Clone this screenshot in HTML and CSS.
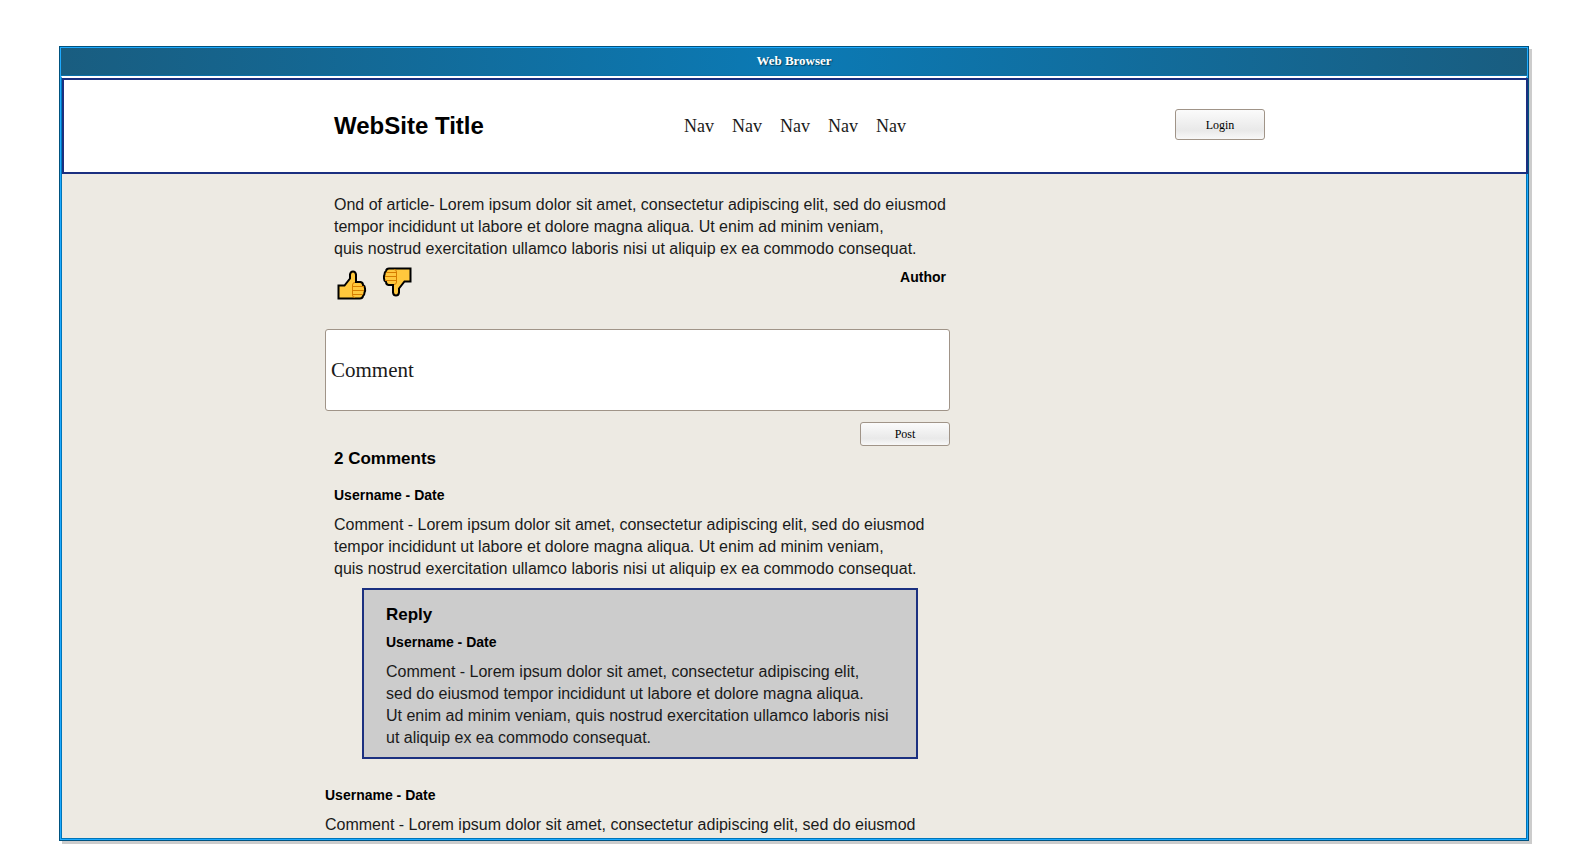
FILE: index.html
```html
<!DOCTYPE html>
<html lang="en">
<head>
<meta charset="utf-8">
<title>Web Browser</title>
<link rel="stylesheet" href="styles.css">
</head>
<body>
<div class="window">
  <div class="title-bar">Web Browser</div>
  <div class="page">
    <header class="site-header">
      <h1 class="site-title">WebSite Title</h1>
      <nav class="site-nav">
        <a href="#">Nav</a>
        <a href="#">Nav</a>
        <a href="#">Nav</a>
        <a href="#">Nav</a>
        <a href="#">Nav</a>
      </nav>
      <button class="button login" type="button">Login</button>
    </header>
    <main class="content">
      <article class="article">
        <p class="text">Ond of article- Lorem ipsum dolor sit amet, consectetur adipiscing elit, sed do eiusmod<br>tempor incididunt ut labore et dolore magna aliqua. Ut enim ad minim veniam,<br>quis nostrud exercitation ullamco laboris nisi ut aliquip ex ea commodo consequat.</p>
        <div class="article-footer">
          <div class="votes">
            <button class="vote up" type="button" aria-label="Like">
              <svg class="thumb" viewBox="0 0 30 30" width="30" height="30">
                <path class="hand" d="M1.500 15.500H7.500L13 8.500V4.500Q13.500 1.500 16 1.500Q18.500 1.500 19 4.500V12H23.500Q26 12.500 26 15Q28 16 28 18.500Q28.500 20.500 27.500 22.500Q27.500 25 26 26Q25.500 28.500 23 28.500H1.500Z"/>
                <path class="fingers" d="M27 16.500H16M16 20.500H27M16 24.500H26M18 27.500Q15.500 27.500 15.500 25V15Q15.500 12.500 18 12.500"/>
              </svg>
            </button>
            <button class="vote down" type="button" aria-label="Dislike">
              <svg class="thumb" viewBox="0 0 30 30" width="30" height="30">
                <path class="hand" d="M28.500 1.500V14.500H22.500L17 21.500V25.500Q16.500 28.500 14 28.500Q11.500 28.500 11 25.500V18H6.500Q4 17.500 4 15Q2 14 2 11.500Q1.500 9.500 2.500 7.500Q2.500 5 4 4Q4.500 1.500 7 1.500Z"/>
                <path class="fingers" d="M3 13.500H14M14 9.500H3M14 5.500H4M12 2.500Q14.500 2.500 14.500 5V15Q14.500 17.500 12 17.500"/>
              </svg>
            </button>
          </div>
          <p class="author">Author</p>
        </div>
      </article>
      <form class="comment-form">
        <input class="comment-box" type="text" aria-label="Comment" value="Comment">
        <button class="button post" type="button">Post</button>
      </form>
      <section class="comments">
        <h2 class="heading">2 Comments</h2>
        <article class="comment">
          <h3 class="byline">Username - Date</h3>
          <p class="text">Comment - Lorem ipsum dolor sit amet, consectetur adipiscing elit, sed do eiusmod<br>tempor incididunt ut labore et dolore magna aliqua. Ut enim ad minim veniam,<br>quis nostrud exercitation ullamco laboris nisi ut aliquip ex ea commodo consequat.</p>
        </article>
        <article class="reply">
          <h2 class="heading">Reply</h2>
          <h3 class="byline">Username - Date</h3>
          <p class="text">Comment - Lorem ipsum dolor sit amet, consectetur adipiscing elit,<br>sed do eiusmod tempor incididunt ut labore et dolore magna aliqua.<br>Ut enim ad minim veniam, quis nostrud exercitation ullamco laboris nisi<br>ut aliquip ex ea commodo consequat.</p>
        </article>
      </section>
      <article class="next-comment">
        <h3 class="byline">Username - Date</h3>
        <p class="text">Comment - Lorem ipsum dolor sit amet, consectetur adipiscing elit, sed do eiusmod</p>
      </article>
    </main>
  </div>
</div>
</body>
</html>
```
FILE: styles.css
```css
* {
  box-sizing: border-box;
}

body {
  margin: 0;
  padding: 46px 53px 16px 59px;
  min-height: 100vh;
  display: flex;
  background: #fff;
  color: #000;
  font-family: "Liberation Sans", Arial, sans-serif;
}

h1, h2, h3, p {
  margin: 0;
}

.window {
  flex: 1;
  display: flex;
  flex-direction: column;
  border: 1px solid #00527f;
  padding: 1px;
  background: #1eaaff;
  box-shadow: 3px 3px 0 #ccc;
}

.title-bar {
  height: 28px;
  border-bottom: 1px solid #0870a8;
  background: linear-gradient(90deg, #195d80, #0b7ab5 50%, #195d80);
  color: #fff;
  font: bold 13px/26px "Liberation Serif", "Times New Roman", serif;
  text-align: center;
  text-shadow: 1px 1px 1px #00405f;
}

.page {
  flex: 1;
  border: 1px solid #0075b8;
  border-top: 2px solid #fff;
  background: #edeae3;
}

.site-header {
  display: grid;
  grid-template-columns: 350px 1fr 90px;
  align-items: center;
  height: 96px;
  margin-right: -2px;
  padding: 0 261px 0 270px;
  border: 2px solid #1b2f80;
  background: #fff;
}

.site-title {
  font-size: 24px;
  line-height: 28px;
}

.site-nav {
  display: flex;
  gap: 18px;
}

.site-nav a {
  color: #1a1a1a;
  font: 18px/22px "Liberation Serif", "Times New Roman", serif;
  text-decoration: none;
}

.button {
  width: 90px;
  padding: 0;
  border: 1px solid #a09488;
  border-radius: 3px;
  background: linear-gradient(#fbfbfb, #e9e9e9 70%, #f8f8f8);
  color: #000;
  font: 12px/16px "Liberation Serif", "Times New Roman", serif;
}

.login {
  height: 31px;
  margin-bottom: 3px;
}

.content {
  width: 625px;
  margin: 20px 0 0 263px;
}

.article {
  padding-left: 9px;
}

.text {
  color: #1a1a1a;
  font-size: 16px;
  line-height: 22px;
  white-space: nowrap;
}

.article-footer {
  display: flex;
  justify-content: space-between;
  height: 69px;
  padding: 7px 4px 0 3px;
}

.votes {
  display: flex;
  align-items: flex-start;
  gap: 15px;
}

.vote {
  display: flex;
  padding: 0;
  border: 0;
  background: none;
}

.up {
  padding-top: 3px;
}

.thumb {
  display: block;
}

.hand {
  fill: #ffc83d;
  stroke: #000;
  stroke-width: 2;
}

.fingers {
  fill: none;
  stroke: #d67d00;
  stroke-width: 1;
}

.author, .byline {
  font-size: 14px;
  font-weight: bold;
  line-height: 20px;
}

.comment-form {
  display: flex;
  flex-direction: column;
  align-items: flex-end;
  gap: 11px;
}

.comment-box {
  width: 100%;
  height: 82px;
  padding: 0 5px;
  border: 1px solid #a09488;
  border-radius: 3px;
  background: #fff;
  color: #1a1a1a;
  font: 21px/24px "Liberation Serif", "Times New Roman", serif;
}

.post {
  height: 24px;
}

.comments {
  padding: 2px 0 0 9px;
}

.heading {
  font-size: 17px;
  line-height: 22px;
}

.comment {
  padding-top: 15px;
}

.byline {
  padding-bottom: 9px;
}

.reply {
  width: 556px;
  margin: 8px 0 0 28px;
  padding: 14px 22px 8px;
  border: 2px solid #1b3080;
  background: #ccc;
}

.reply .byline {
  padding-top: 6px;
}

.next-comment {
  padding: 26px 0 2px;
}
```
